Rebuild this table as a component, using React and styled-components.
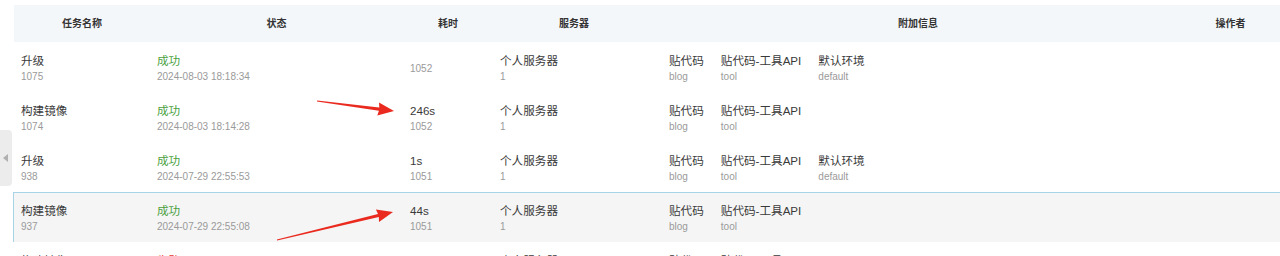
import React from "react";
import styled, { createGlobalStyle } from "styled-components";

const GlobalStyle = createGlobalStyle`
  html, body {
    margin: 0;
    padding: 0;
    background: #fff;
    overflow: hidden;
  }
  body {
    font-family: "Liberation Sans", "Noto Sans CJK SC", sans-serif;
    color: #333;
  }
`;

const COLS = "136px 253px 90px 162px 526px 1fr";

const Page = styled.div`
  position: relative;
  width: 1280px;
  height: 256px;
  padding: 5px 0 0 14px;
  box-sizing: border-box;
  overflow: hidden;
`;

const HeaderRow = styled.div`
  display: grid;
  grid-template-columns: ${COLS};
  height: 38px;
  background: #f4f7fa;
  align-items: center;
`;

const HeadCell = styled.div`
  text-align: center;
  font-size: 10px;
  font-weight: 700;
  color: #333;
  line-height: 14px;
`;

const Row = styled.div`
  display: grid;
  grid-template-columns: ${COLS};
  height: 49px;
  box-sizing: content-box;
  background: ${({ $active }) => ($active ? "#f5f5f5" : "#fff")};
  border: 1px solid ${({ $active }) => ($active ? "#a9d3e6" : "transparent")};
  border-right: none;
  box-shadow: ${({ $active }) => ($active ? "0 1px 0 #d4eaf5" : "none")};
  margin: ${({ $active }) => ($active ? "0 0 0 -1px" : "-1px 0 -1px -1px")};
`;

const Cell = styled.div`
  display: flex;
  flex-direction: column;
  justify-content: center;
  padding: 3px 0 0 ${({ $pad }) => $pad || 7}px;
  min-width: 0;
`;

const Main = styled.div`
  font-size: 11.6px;
  line-height: 16px;
  white-space: nowrap;
  color: ${({ $tone }) =>
    $tone === "ok" ? "#4a9f3e" : $tone === "fail" ? "#e8342a" : "#3a3a3a"};
`;

const Sub = styled.div`
  font-size: 10px;
  line-height: 16px;
  color: #9a9a9a;
  white-space: nowrap;
`;

const Tags = styled.div`
  display: flex;
  gap: 17px;
  padding: 3px 0 0 14px;
  align-items: center;
`;

const Tag = styled.div`
  display: flex;
  flex-direction: column;
`;

const Handle = styled.div`
  position: absolute;
  left: 0;
  top: 130px;
  width: 12px;
  height: 56px;
  background: #ececec;
  border-radius: 0 4px 4px 0;
  display: flex;
  align-items: center;
  justify-content: center;
  &::before {
    content: "";
    border-style: solid;
    border-width: 4px 5px 4px 0;
    border-color: transparent #b0b0b0 transparent transparent;
    margin-left: -2px;
  }
`;

const Overlay = styled.svg`
  position: absolute;
  left: 0;
  top: 0;
  width: 1280px;
  height: 256px;
  pointer-events: none;
`;

const rows = [
  {
    name: "升级", id: "1075", status: "成功", tone: "ok", time: "2024-08-03 18:18:34",
    dur: "", durId: "1052",
    tags: [["贴代码", "blog"], ["贴代码-工具API", "tool"], ["默认环境", "default"]],
  },
  {
    name: "构建镜像", id: "1074", status: "成功", tone: "ok", time: "2024-08-03 18:14:28",
    dur: "246s", durId: "1052",
    tags: [["贴代码", "blog"], ["贴代码-工具API", "tool"]],
  },
  {
    name: "升级", id: "938", status: "成功", tone: "ok", time: "2024-07-29 22:55:53",
    dur: "1s", durId: "1051",
    tags: [["贴代码", "blog"], ["贴代码-工具API", "tool"], ["默认环境", "default"]],
  },
  {
    name: "构建镜像", id: "937", status: "成功", tone: "ok", time: "2024-07-29 22:55:08",
    dur: "44s", durId: "1051", active: true,
    tags: [["贴代码", "blog"], ["贴代码-工具API", "tool"]],
  },
  {
    name: "构建镜像", id: "936", status: "失败", tone: "fail", time: "2024-07-29 22:50:11",
    dur: "12s", durId: "1051",
    tags: [["贴代码", "blog"], ["贴代码-工具API", "tool"]],
  },
];

function arrowPoints([tx, ty], [hx, hy]) {
  const dx = hx - tx;
  const dy = hy - ty;
  const len = Math.hypot(dx, dy);
  const ux = dx / len;
  const uy = dy / len;
  const nx = -uy;
  const ny = ux;
  const bx = hx - ux * 15;
  const by = hy - uy * 15;
  const p = (x, y) => `${x.toFixed(1)},${y.toFixed(1)}`;
  return [
    p(tx + nx * 0.4, ty + ny * 0.4),
    p(bx + nx * 1.6, by + ny * 1.6),
    p(bx - ux * 1 + nx * 6.5, by - uy * 1 + ny * 6.5),
    p(hx, hy),
    p(bx - ux * 1 - nx * 6.5, by - uy * 1 - ny * 6.5),
    p(bx - nx * 1.6, by - ny * 1.6),
    p(tx - nx * 0.4, ty - ny * 0.4),
  ].join(" ");
}

const Arrow = ({ from, to }) => (
  <polygon points={arrowPoints(from, to)} fill="#ea2a1f" />
);

export default function App() {
  return (
    <>
      <GlobalStyle />
      <Page>
        <HeaderRow>
          <HeadCell>任务名称</HeadCell>
          <HeadCell>状态</HeadCell>
          <HeadCell>耗时</HeadCell>
          <HeadCell>服务器</HeadCell>
          <HeadCell>附加信息</HeadCell>
          <HeadCell>操作者</HeadCell>
        </HeaderRow>
        {rows.map((r, i) => (
          <Row key={i} $active={r.active}>
            <Cell>
              <Main>{r.name}</Main>
              <Sub>{r.id}</Sub>
            </Cell>
            <Cell>
              <Main $tone={r.tone}>{r.status}</Main>
              <Sub>{r.time}</Sub>
            </Cell>
            <Cell>
              {r.dur && <Main>{r.dur}</Main>}
              <Sub>{r.durId}</Sub>
            </Cell>
            <Cell>
              <Main>个人服务器</Main>
              <Sub>1</Sub>
            </Cell>
            <Tags>
              {r.tags.map(([t, s]) => (
                <Tag key={t}>
                  <Main>{t}</Main>
                  <Sub>{s}</Sub>
                </Tag>
              ))}
            </Tags>
            <Cell />
          </Row>
        ))}
        <Handle />
        <Overlay viewBox="0 0 1280 256">
          <Arrow from={[317, 101]} to={[394, 111]} />
          <Arrow from={[277, 240]} to={[393, 212]} />
        </Overlay>
      </Page>
    </>
  );
}
